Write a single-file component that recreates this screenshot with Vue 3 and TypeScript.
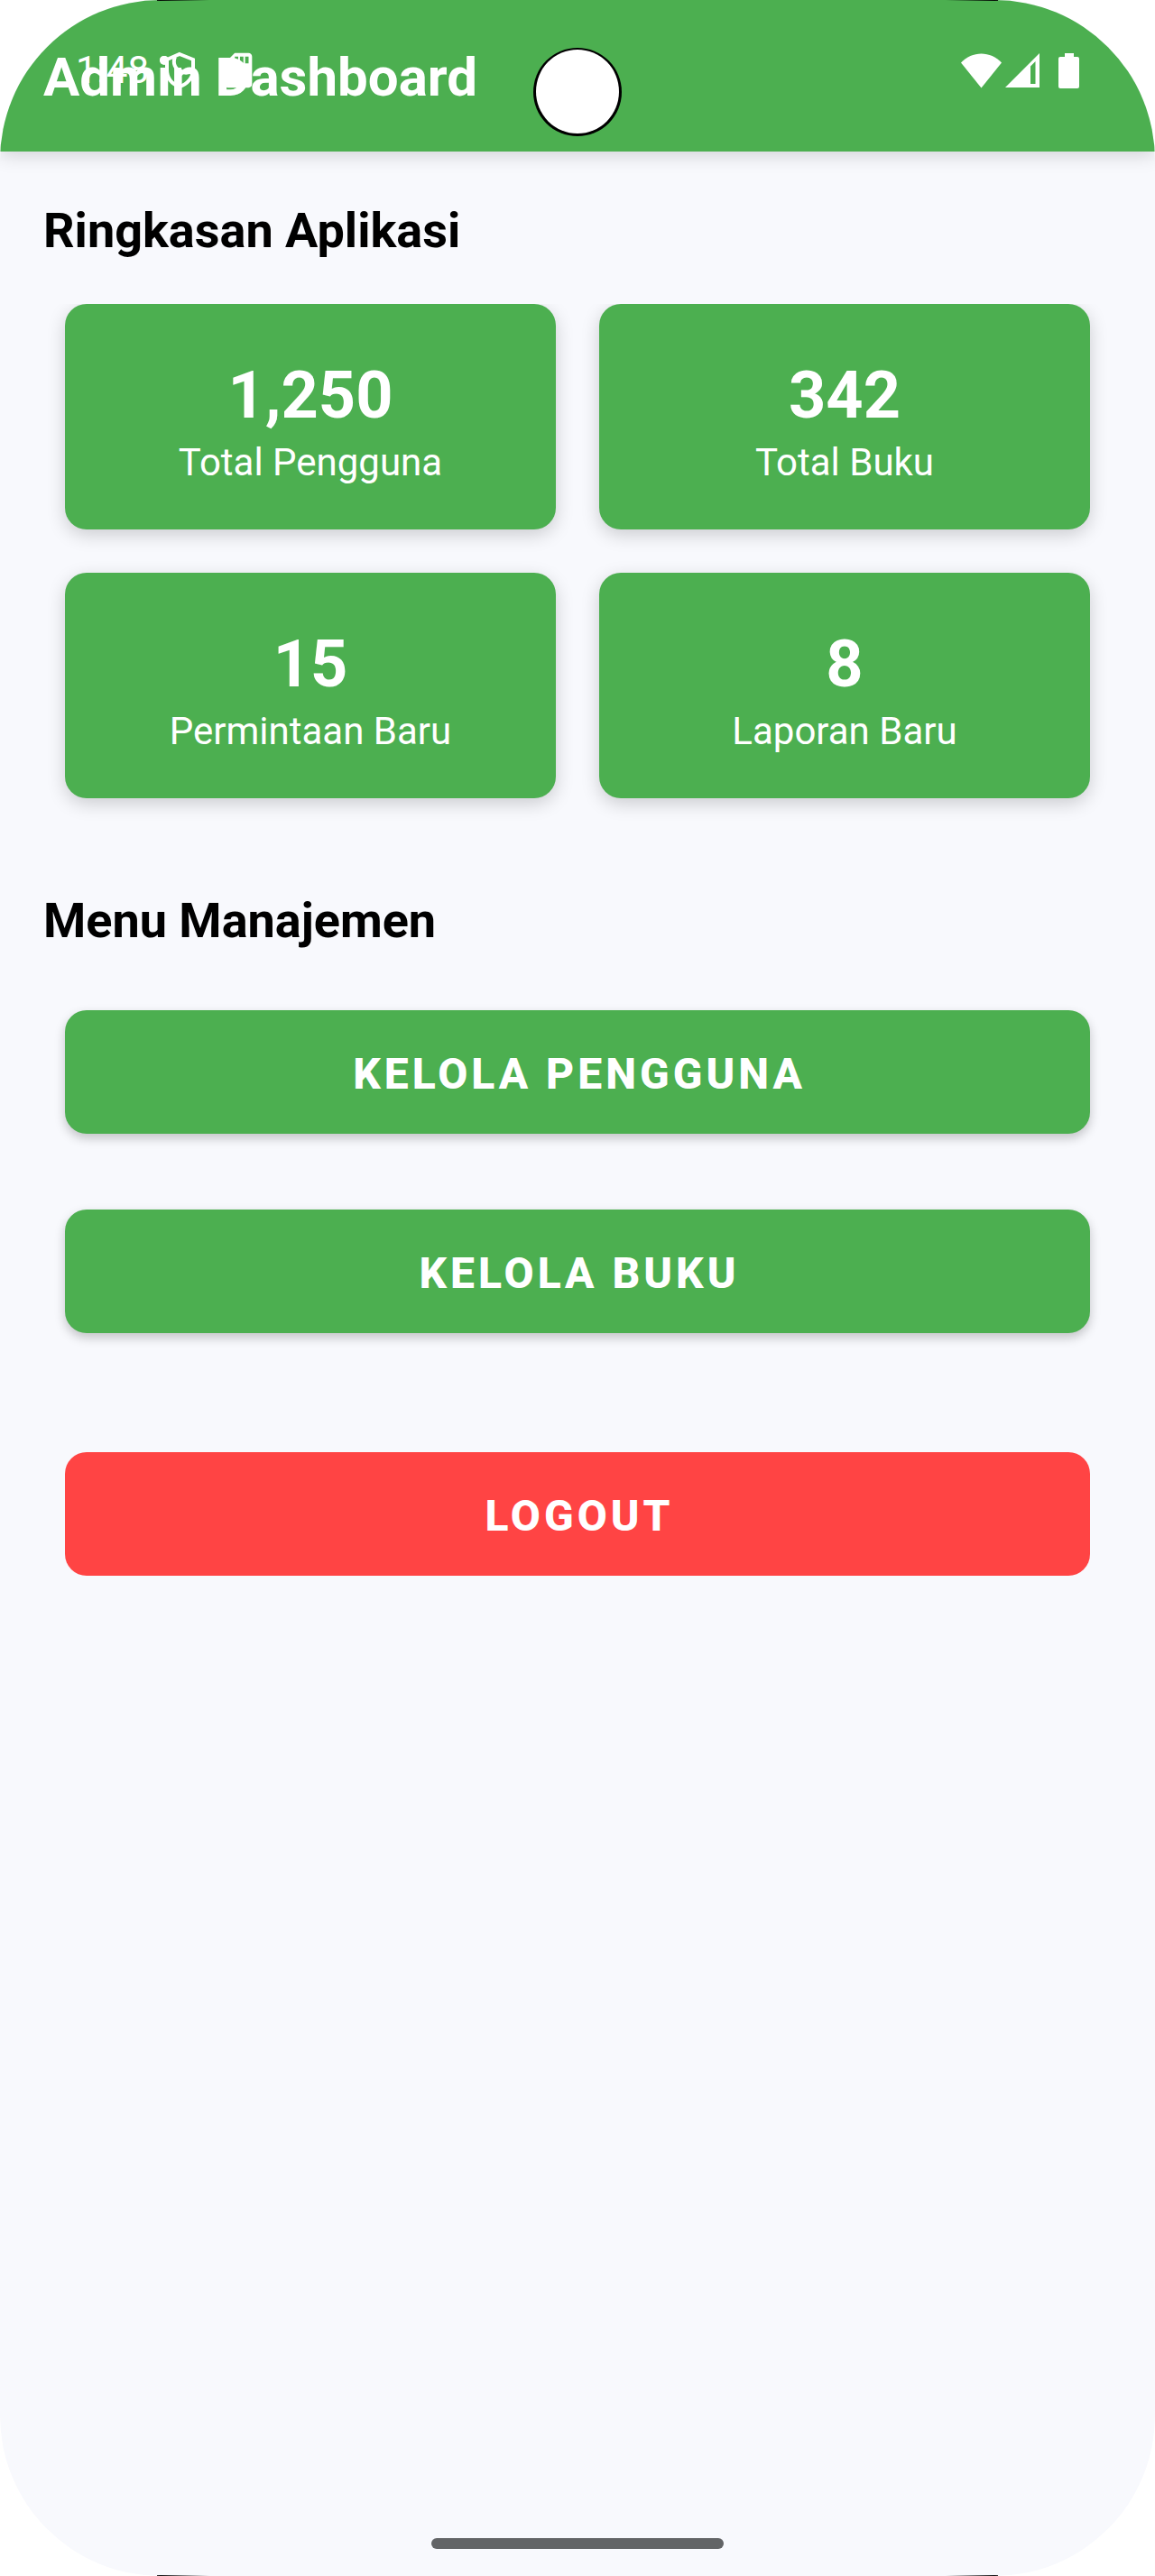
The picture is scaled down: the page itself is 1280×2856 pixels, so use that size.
<script setup lang="ts">
interface Stat {
  value: string
  label: string
}

const stats: Stat[] = [
  { value: '1,250', label: 'Total Pengguna' },
  { value: '342', label: 'Total Buku' },
  { value: '15', label: 'Permintaan Baru' },
  { value: '8', label: 'Laporan Baru' },
]

const menu: string[] = ['KELOLA PENGGUNA', 'KELOLA BUKU']
</script>

<template>
  <div class="screen">
    <header class="app-bar">
      <h1 class="title">Admin Dashboard</h1>
      <div class="status-bar">
        <div class="status-left">
          <span class="time">1:48</span>
          <svg class="icon shield" viewBox="0 0 46 46" aria-hidden="true">
            <path d="M23 5 38 11V22C38 31 32 38 23 41C14 38 9 31 9 22V11Z" fill="none" stroke="#fff" stroke-width="4" />
            <path d="M18 8C15 15 18 22 25 24C28 26 31 27 35 24" fill="none" stroke="#fff" stroke-width="4" />
            <circle cx="6" cy="12" r="5" fill="#fff" />
          </svg>
          <svg class="icon" viewBox="0 0 24 24" aria-hidden="true">
            <path fill="#fff" d="M18 2h-8L4.020 8 4 20c0 1.100.9 2 2 2h12c1.100 0 2-.9 2-2V4c0-1.100-.9-2-2-2zm-6 6h-2V4h2v4zm3 0h-2V4h2v4zm3 0h-2V4h2v4z" />
          </svg>
        </div>
        <div class="status-right">
          <svg class="wifi" viewBox="0 0 45 39" aria-hidden="true">
            <path fill="#fff" d="M0 10.500C12-3 33-3 45 10.500L22.500 38.500Z" />
          </svg>
          <svg class="signal" viewBox="0 0 38 38" aria-hidden="true">
            <path fill="#fff" fill-rule="evenodd" d="M0 38 38 0V38ZM28 14.500V34H33.500V9Z" />
          </svg>
          <svg class="battery" viewBox="0 0 23 39" aria-hidden="true">
            <path fill="#fff" d="M7 0h10v4h4q2 0 2 2v31q0 2-2 2H2q-2 0-2-2V6q0-2 2-2h5z" />
          </svg>
        </div>
      </div>
      <div class="camera"><div class="lens"></div></div>
    </header>

    <main class="content">
      <section>
        <h2 class="heading">Ringkasan Aplikasi</h2>
        <div class="stats">
          <article v-for="stat in stats" :key="stat.label" class="card">
            <strong class="value">{{ stat.value }}</strong>
            <span class="label">{{ stat.label }}</span>
          </article>
        </div>
      </section>

      <section class="management">
        <h2 class="heading">Menu Manajemen</h2>
        <nav class="menu">
          <button v-for="item in menu" :key="item" type="button" class="btn raised">{{ item }}</button>
        </nav>
      </section>

      <div class="session">
        <button type="button" class="btn logout">LOGOUT</button>
      </div>
    </main>

    <footer class="nav-bar"><div class="handle"></div></footer>
  </div>
</template>

<style>
body {
  margin: 0;
  background: #fff;
}
</style>

<style scoped>
.screen {
  position: relative;
  display: flex;
  flex-direction: column;
  min-height: 100vh;
  overflow: hidden;
  border-radius: 178px;
  background: #f8f9fd;
  color: #000;
  font-family: Roboto, "Liberation Sans", sans-serif;
}

/* thin bezel glints where the rounded corners meet the straight edges */
.screen::before,
.screen::after {
  content: "";
  position: absolute;
  left: 174px;
  right: 174px;
  height: 1px;
  z-index: 3;
  background:
    linear-gradient(to right, #000, transparent) left / 58px 1px no-repeat,
    linear-gradient(to left, #000, transparent) right / 58px 1px no-repeat;
}

.screen::before {
  top: 0;
}

.screen::after {
  bottom: 0;
}

.app-bar {
  position: relative;
  padding: 50px 48px 46px;
  background: #4caf50;
  color: #fff;
  box-shadow: 0 4px 20px rgba(0, 0, 0, 0.16);
}

.title {
  margin: 0;
  font-size: 60px;
  line-height: 72px;
  font-weight: 700;
}

.status-bar {
  position: absolute;
  top: 0;
  left: 0;
  right: 0;
  height: 156px;
  padding: 0 84px;
  display: flex;
  align-items: center;
  justify-content: space-between;
}

.status-left,
.status-right {
  display: flex;
  align-items: center;
}

.time {
  font-size: 42px;
  line-height: 48px;
}

.icon {
  width: 46px;
  height: 46px;
}

.shield {
  margin: 0 19px 0 11px;
}

.wifi {
  width: 45px;
  height: 39px;
}

.signal {
  width: 38px;
  height: 38px;
  margin: 0 21px 0 4px;
}

.battery {
  width: 23px;
  height: 39px;
}

.camera {
  position: absolute;
  top: 53px;
  left: calc(50% - 49px);
  width: 98px;
  height: 98px;
  box-sizing: border-box;
  padding: 2px 3px 3px;
  border-radius: 50%;
  background: #000;
}

.lens {
  height: 100%;
  border-radius: 50%;
  background: #fff;
}

.content {
  flex: 1;
  padding: 56px 48px 0;
}

.heading {
  margin: 0;
  font-size: 54px;
  line-height: 64px;
  font-weight: 700;
}

.stats {
  display: grid;
  grid-template-columns: 1fr 1fr;
  gap: 48px;
  margin-top: 49px;
  padding: 0 24px;
  clip-path: inset(0 -24px -48px);
}

.card {
  display: flex;
  flex-direction: column;
  align-items: center;
  padding: 56px 24px 46px;
  border-radius: 24px;
  background: #4caf50;
  color: #fff;
  box-shadow: 0 6px 20px rgba(0, 0, 0, 0.18);
}

.value {
  font-size: 72px;
  line-height: 92px;
  font-weight: 700;
}

.label {
  font-size: 42px;
  line-height: 56px;
}

.management {
  margin-top: 104px;
}

.menu {
  display: flex;
  flex-direction: column;
  gap: 84px;
  margin-top: 67px;
  padding: 0 24px;
}

.btn {
  display: block;
  width: 100%;
  margin: 0;
  padding: 43px 48px 38px;
  border: 0;
  border-radius: 24px;
  color: #fff;
  font-family: inherit;
  font-size: 48px;
  line-height: 56px;
  font-weight: 800;
  letter-spacing: 4px;
  text-indent: 4px;
  cursor: pointer;
}

.raised {
  background: #4caf50;
  box-shadow: 0 5px 12px rgba(0, 0, 0, 0.22);
}

.session {
  margin-top: 132px;
  padding: 0 24px;
}

.logout {
  background: #ff4444;
}

.nav-bar {
  display: flex;
  justify-content: center;
  padding: 30px 0;
}

.handle {
  width: 324px;
  height: 12px;
  border-radius: 6px;
  background: #626466;
}
</style>
